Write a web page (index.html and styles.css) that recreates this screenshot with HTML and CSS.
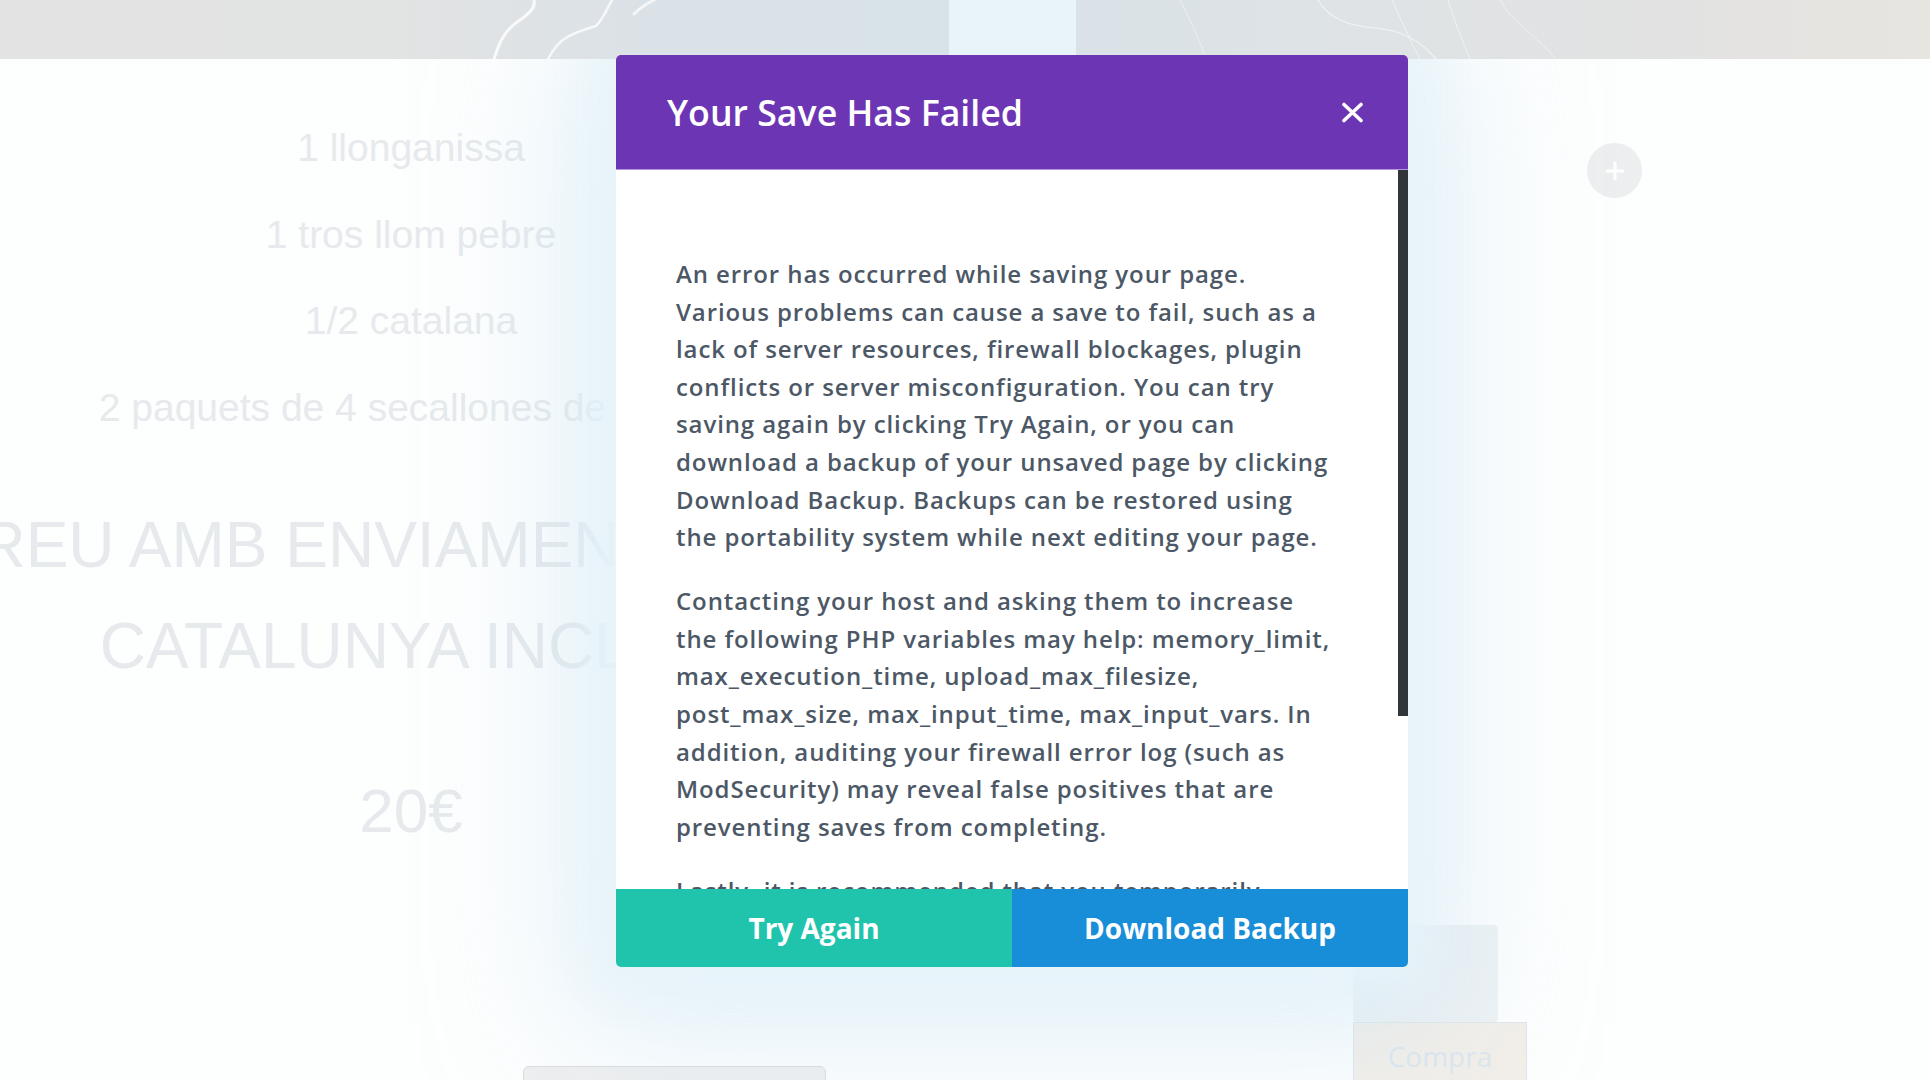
FILE: index.html
```html
<!DOCTYPE html>
<html lang="ca">

<head>
    <meta charset="UTF-8">
    <meta name="viewport" content="width=device-width, initial-scale=1.0">
    <title>Lot d'embotits</title>
    <link rel="stylesheet" href="styles.css">
</head>

<body>
    <div class="hero-strip">
        <svg width="1930" height="59" viewBox="0 0 1930 59">
            <defs>
                <linearGradient id="strip" x1="0" y1="0" x2="1" y2="0">
                    <stop offset="0" stop-color="#e3e3e3" />
                    <stop offset="0.2" stop-color="#e2e3e3" />
                    <stop offset="0.33" stop-color="#dbe2e7" />
                    <stop offset="0.48" stop-color="#d8e2e9" />
                    <stop offset="0.58" stop-color="#dae2e7" />
                    <stop offset="0.72" stop-color="#dfe3e5" />
                    <stop offset="0.86" stop-color="#e2e2e2" />
                    <stop offset="1" stop-color="#e7e5e0" />
                </linearGradient>
            </defs>
            <rect width="1930" height="59" fill="url(#strip)" />
            <rect x="949" width="127" height="59" fill="#e8f4f9" />
            <g fill="none" stroke="#ffffff" stroke-linecap="round">
                <path d="M494 59 C500 40 505 30 520 20 C535 10 535 4 534 0" stroke-width="3" opacity="0.8" />
                <path d="M548 59 C556 45 560 36 596 26 C604 18 606 10 612 0" stroke-width="2.5" opacity="0.75" />
                <path d="M634 14 C640 8 646 4 654 0" stroke-width="3" opacity="0.7" />
                <path d="M1318 0 C1330 20 1350 26 1376 28 C1400 30 1420 40 1436 59" stroke-width="1.2" opacity="0.6" />
                <path d="M1392 0 C1400 18 1410 40 1420 59" stroke-width="1" opacity="0.5" />
                <path d="M1448 0 C1454 20 1462 40 1470 59" stroke-width="1" opacity="0.5" />
                <path d="M1500 0 C1510 20 1530 30 1556 59" stroke-width="1" opacity="0.45" />
                <path d="M1180 0 C1190 20 1200 40 1206 59" stroke-width="1" opacity="0.4" />
            </g>
        </svg>
    </div>

    <div class="content">
        <section class="product-col">
            <div class="ingredient">1 llonganissa</div>
            <div class="ingredient">1 tros llom pebre</div>
            <div class="ingredient">1/2 catalana</div>
            <div class="ingredient">2 paquets de 4 secallones de pagès</div>

            <div class="shipping">
                <div>Correu amb enviament a tota la</div>
                <div>Catalunya inclòs</div>
            </div>

            <div class="price">20€</div>

            <div class="tab-box"></div>
        </section>

        <aside class="side-col">
            <button class="add-module">
                <svg width="20" height="20" viewBox="0 0 20 20">
                    <path d="M10 2v16M2 10h16" stroke="#ffffff" stroke-width="3" stroke-linecap="round" />
                </svg>
            </button>
            <div class="thumb-box"></div>
            <button class="buy-button">Compra</button>
        </aside>
    </div>

    <!-- soft glow sits under the photo strip, the modal sits above it -->
    <div class="modal-glow"></div>

    <div class="modal">
        <div class="modal-header">
            <h3 class="modal-title">Your Save Has Failed</h3>
            <button class="modal-close" aria-label="Close">
                <svg width="23" height="21" viewBox="0 0 23 21">
                    <path d="M3 2.5l17 16M20 2.5l-17 16" stroke="#ffffff" stroke-width="3.6" stroke-linecap="round" />
                </svg>
            </button>
        </div>

        <div class="modal-body">
            <div class="modal-text">
                <p>An error has occurred while saving your page. Various problems can cause a save to fail, such as a
                    lack of server resources, firewall blockages, plugin conflicts or server misconfiguration. You
                    can try saving again by clicking Try Again, or you can download a backup of your unsaved page by
                    clicking Download Backup. Backups can be restored using the portability system while next editing
                    your page.</p>
                <p>Contacting your host and asking them to increase the following PHP variables may help:
                    memory_limit, max_execution_time, upload_max_filesize, post_max_size, max_input_time,
                    max_input_vars. In addition, auditing your firewall error log (such as ModSecurity) may reveal
                    false positives that are preventing saves from completing.</p>
                <p>Lastly, it is recommended that you temporarily disable all WordPress plugins and browser
                    extensions and try to save again to determine if something is causing a conflict.</p>
            </div>
            <div class="modal-scrollbar">
                <div class="modal-scroll-thumb"></div>
            </div>
        </div>

        <div class="modal-footer">
            <button class="modal-button try-again">Try Again</button>
            <button class="modal-button download">Download Backup</button>
        </div>
    </div>
</body>

</html>
```

FILE: styles.css
```css
body {
    margin: 0;
    width: 1930px;
    height: 1080px;
    overflow: hidden;
    position: relative;
    background-color: #fdfefe;
    font-family: 'Liberation Sans', Arial, sans-serif;
}

.hero-strip {
    position: relative;
    z-index: 2;
}

.hero-strip svg {
    display: block;
}

.content {
    display: flex;
}

/* faded page content behind the modal */
.product-col {
    width: 822px;
    flex-shrink: 0;
    display: flex;
    flex-direction: column;
    align-items: center;
    padding-top: 46px;
    color: #e6eaed;
}

.ingredient {
    font-size: 39px;
    line-height: 86.7px;
    white-space: nowrap;
}

.shipping {
    margin-top: 43px;
    font-size: 64px;
    line-height: 101px;
    text-transform: uppercase;
    white-space: nowrap;
    display: flex;
    flex-direction: column;
    align-items: center;
}

.price {
    margin-top: 63px;
    font-size: 62px;
    line-height: 101px;
}

.tab-box {
    align-self: flex-start;
    margin-left: 523px;
    margin-top: 205px;
    width: 301px;
    height: 40px;
    background-color: #efefef;
    border: 1px solid #dcdcdc;
    border-radius: 6px 6px 0 0;
}

.side-col {
    margin-left: 531px;
    display: flex;
    flex-direction: column;
    align-items: flex-start;
}

.add-module {
    margin-top: 84px;
    margin-left: 234px;
    width: 55px;
    height: 55px;
    border: none;
    border-radius: 50%;
    background-color: #edeeef;
    display: flex;
    align-items: center;
    justify-content: center;
    padding: 0;
}

.thumb-box {
    margin-top: 727px;
    width: 145px;
    height: 97px;
    background-color: #eef2f4;
    border-radius: 4px;
}

.buy-button {
    width: 174px;
    height: 70px;
    padding: 0 0 2px;
    background-color: #f3efe9;
    border: 1px solid #dfe6ea;
    color: #dce6ee;
    font-family: 'Open Sans', sans-serif;
    font-size: 28px;
}

/* modal */
.modal-glow {
    position: absolute;
    top: 55px;
    left: 616px;
    width: 792px;
    height: 912px;
    z-index: 1;
    border-radius: 5px;
    box-shadow: 0 0 40px 24px rgba(232, 244, 250, 0.9), 0 20px 140px 40px rgba(196, 226, 243, 0.5);
}

.modal {
    position: absolute;
    top: 55px;
    left: 616px;
    width: 792px;
    z-index: 3;
    border-radius: 5px;
    background-color: #fff;
    font-family: 'Open Sans', sans-serif;
}

.modal-header {
    height: 114px;
    display: flex;
    align-items: center;
    justify-content: space-between;
    padding: 0 44px 0 51px;
    background-color: #6c35b3;
    border-radius: 5px 5px 0 0;
    border-bottom: 1px solid #b596e0;
}

.modal-title {
    margin: 0;
    font-size: 35.7px;
    font-weight: 600;
    color: #fff;
}

.modal-close {
    border: none;
    background: none;
    padding: 0;
    display: flex;
}

.modal-body {
    height: 719px;
    display: flex;
    overflow: hidden;
}

.modal-text {
    flex: 1;
    padding: 85px 67px 0 60px;
    font-size: 24px;
    font-weight: 600;
    letter-spacing: 0.9px;
    line-height: 37.6px;
    color: #4c5866;
}

.modal-text p {
    margin: 0 0 26.4px;
}

.modal-scrollbar {
    width: 10px;
    flex-shrink: 0;
}

.modal-scroll-thumb {
    height: 546px;
    background-color: #30363a;
}

.modal-footer {
    display: flex;
    height: 78px;
}

.modal-button {
    flex: 1;
    border: none;
    color: #fff;
    font-family: 'Open Sans', sans-serif;
    font-size: 28px;
    font-weight: 700;
}

.try-again {
    background-color: #20c4ad;
    border-radius: 0 0 0 5px;
}

.download {
    background-color: #188ed8;
    border-radius: 0 0 5px 0;
}
```
